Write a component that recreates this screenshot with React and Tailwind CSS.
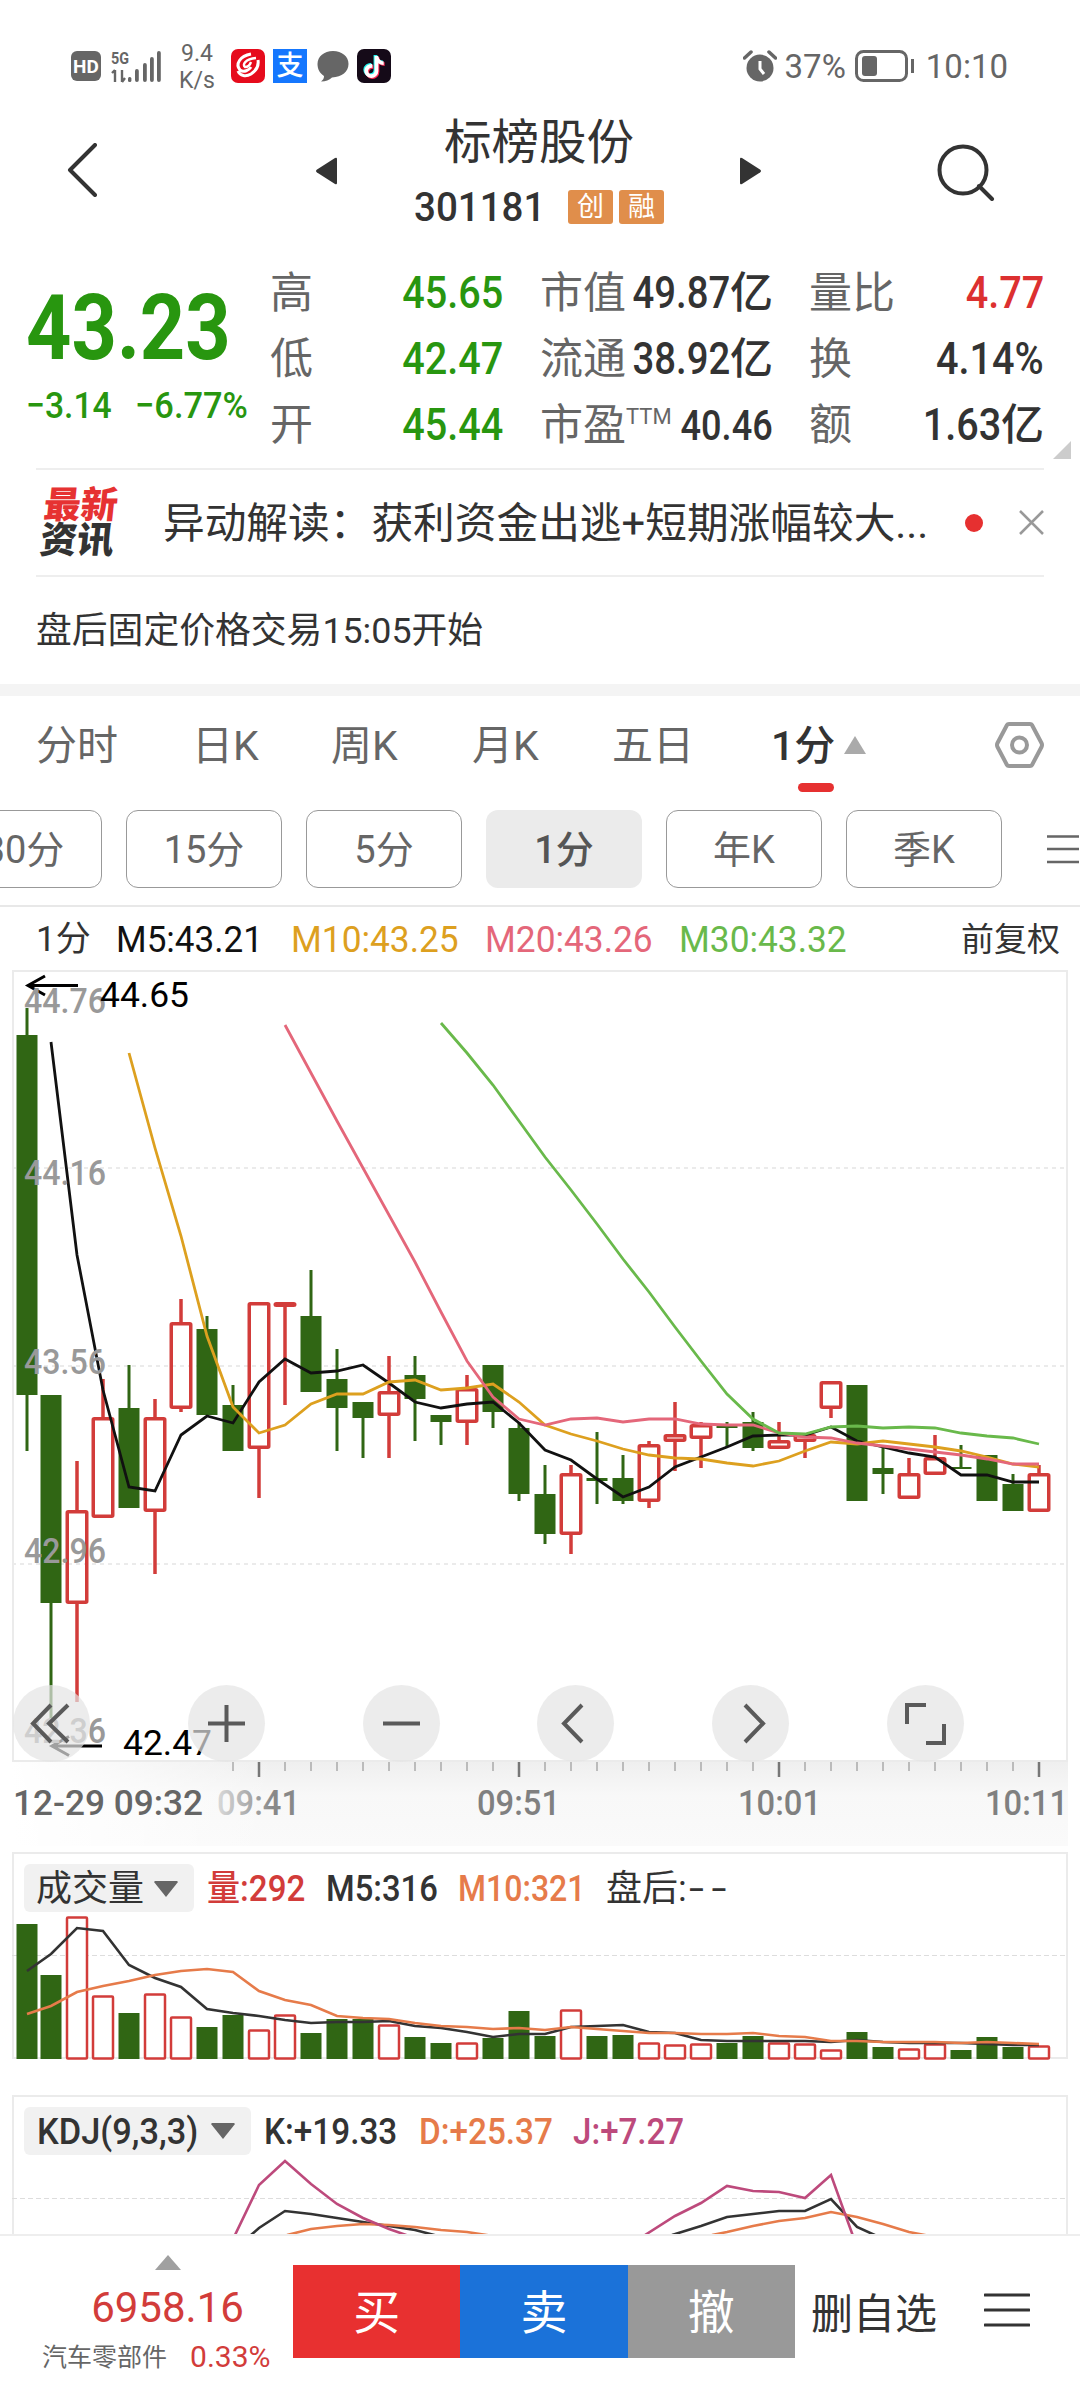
import React from "react";
import { FaTiktok } from "react-icons/fa";

const GREEN = "#306614";
const RED = "#d23c3a";

// [up, high, top, bottom, low]
const candles = [
  [0, 1008, 1035, 1395, 1451],
  [0, 1395, 1395, 1603, 1726],
  [1, 1461, 1510, 1604, 1702],
  [1, 1379, 1417, 1518, 1518],
  [0, 1365, 1408, 1508, 1508],
  [1, 1399, 1417, 1512, 1574],
  [1, 1299, 1322, 1409, 1412],
  [0, 1316, 1329, 1415, 1415],
  [0, 1385, 1405, 1451, 1451],
  [1, 1302, 1302, 1449, 1498],
  [1, 1302, 1302, 1307, 1405],
  [0, 1270, 1316, 1392, 1392],
  [0, 1349, 1379, 1408, 1451],
  [0, 1402, 1402, 1418, 1458],
  [1, 1356, 1391, 1416, 1458],
  [0, 1356, 1375, 1399, 1441],
  [0, 1415, 1415, 1422, 1445],
  [1, 1375, 1388, 1423, 1445],
  [0, 1365, 1365, 1412, 1428],
  [0, 1422, 1428, 1494, 1501],
  [0, 1465, 1494, 1534, 1544],
  [1, 1465, 1473, 1535, 1554],
  [0, 1432, 1478, 1481, 1504],
  [0, 1455, 1478, 1501, 1504],
  [1, 1441, 1444, 1502, 1508],
  [1, 1402, 1434, 1442, 1471],
  [1, 1422, 1424, 1439, 1468],
  [0, 1422, 1426, 1428, 1447],
  [0, 1412, 1422, 1448, 1451],
  [1, 1422, 1440, 1449, 1449],
  [1, 1434, 1434, 1442, 1458],
  [1, 1381, 1381, 1409, 1418],
  [0, 1385, 1385, 1501, 1501],
  [0, 1448, 1468, 1474, 1494],
  [1, 1458, 1473, 1499, 1499],
  [1, 1435, 1457, 1475, 1475],
  [0, 1445, 1467, 1469, 1469],
  [0, 1455, 1455, 1501, 1501],
  [0, 1474, 1484, 1511, 1511],
  [1, 1465, 1473, 1512, 1512],
];

const volumes = [
  1924, 1975, 1916, 1995, 2013, 1993, 2016, 2027, 2015, 2029, 2014, 2033, 2019, 2019, 2024, 2037, 2043, 2042, 2038,
  2011, 2036, 2009, 2036, 2035, 2042, 2044, 2043, 2043, 2036, 2042, 2043, 2049, 2032, 2047, 2048, 2043, 2050, 2037,
  2047, 2045,
];

const ma5 = [
  1042, 1255, 1390, 1487, 1491, 1435, 1416, 1423, 1382, 1359, 1373, 1371, 1365, 1383, 1402, 1408, 1404, 1402, 1423,
  1450, 1460, 1479, 1497, 1487, 1467, 1457, 1447, 1436, 1435, 1435, 1427, 1441, 1447, 1453, 1457, 1475, 1475, 1482,
  1482,
];
const ma10 = [
  1053, 1148, 1236, 1336, 1407, 1433, 1425, 1404, 1394, 1394, 1382, 1380, 1390, 1388, 1384, 1402, 1425, 1434, 1441,
  1449, 1455, 1458, 1459, 1463, 1466, 1461, 1451, 1442, 1444, 1441, 1444, 1447, 1451, 1457, 1464, 1467,
];
const ma20 = [
  1025, 1073, 1121, 1168, 1215, 1262, 1312, 1361, 1397, 1419, 1425, 1419, 1418, 1422, 1419, 1419, 1424, 1425, 1425,
  1433, 1437, 1438, 1443, 1446, 1449, 1452, 1455, 1459, 1464, 1464,
];
const ma30 = [
  1023, 1053, 1085, 1121, 1157, 1190, 1224, 1259, 1292, 1327, 1361, 1394, 1419, 1433, 1434, 1427, 1426, 1428, 1427,
  1428, 1433, 1436, 1438, 1444,
];
const vol5 = [
  1971, 1954, 1928, 1931, 1965, 1978, 1987, 2009, 2013, 2016, 2020, 2023, 2022, 2022, 2021, 2026, 2028, 2032, 2037,
  2034, 2034, 2027, 2026, 2025, 2032, 2033, 2040, 2041, 2041, 2041, 2041, 2042, 2040, 2042, 2043, 2043, 2043, 2044,
  2045, 2045,
];
const vol10 = [
  2014, 2006, 1992, 1986, 1981, 1975, 1971, 1969, 1972, 1991, 2000, 2005, 2016, 2018, 2019, 2023, 2026, 2027, 2029,
  2028, 2030, 2027, 2029, 2031, 2033, 2033, 2034, 2034, 2033, 2036, 2037, 2041, 2041, 2042, 2042, 2042, 2043, 2042,
  2043, 2044,
];

const cx = (i) => (i === 0 ? 27 : 25 + i * 26);
const line = (values, start) => values.map((y, i) => `${cx(i + start)},${y}`).join(" ");

// Narrow, DIN-like digits
function Num({ className = "", children }) {
  return <span className={`inline-block whitespace-nowrap ${className}`}>{children}</span>;
}

function Caret({ up, className }) {
  return (
    <svg className={className} viewBox="0 0 24 16" preserveAspectRatio="none" fill="currentColor">
      <path d={up ? "M12 0L24 16H0z" : "M1 0h22l1 1-12 15L0 1z"} />
    </svg>
  );
}

function StatusBar() {
  return (
    <div className="flex h-[108px] items-center pt-6 pr-[72px] pl-[71px] text-[#666]">
      <div className="flex h-[30px] w-[30px] items-center justify-center rounded-[6px] bg-[#666]">
        <span className="text-[19px] leading-none font-bold text-white">HD</span>
      </div>
      <svg className="ml-[10px] h-[34px] w-[52px]" viewBox="0 0 52 34" fill="#666">
        <text x="0" y="15" fontSize="17" fontWeight="700" textLength="18" lengthAdjust="spacingAndGlyphs">
          5G
        </text>
        <path d="M4 21v12M1 24l3-3M11 21v12M11 33l3-4" stroke="#666" strokeWidth="2.4" fill="none" />
        <rect x="17" y="28" width="3.4" height="5" rx="1.5" />
        <rect x="24" y="20" width="3.8" height="13" rx="1.9" />
        <rect x="32" y="14" width="3.8" height="19" rx="1.9" />
        <rect x="39" y="8" width="3.8" height="25" rx="1.9" />
        <rect x="46" y="2" width="3.8" height="31" rx="1.9" />
      </svg>
      <div className="mt-[2px] ml-[15px] flex w-[38px] flex-col items-center text-[23px] leading-[27px]">
        <span>9.4</span>
        <span>K/s</span>
      </div>
      <svg className="ml-[15px] h-[34px] w-[34px]" viewBox="0 0 34 34" fill="none" stroke="#fff">
        <rect width="34" height="34" rx="7" fill="#e60b1c" stroke="none" />
        <path d="M20 5C9 7 4 15 9 21c4 3 9 0 11-3" strokeWidth="3" />
        <path d="M25 9C14 10 11 16 14 18c3 0 5-2 6-5" strokeWidth="2.4" />
        <path d="M7 22c2 5 8 6 13 3 6-4 8-8 7-14" strokeWidth="3" />
      </svg>
      <div className="ml-2 flex h-[34px] w-[34px] items-center justify-center bg-[#1577fe]">
        <span className="text-[27px] leading-none font-medium text-white">支</span>
      </div>
      <svg className="ml-[10px] h-[31px] w-[32px]" viewBox="0 0 32 31" fill="#666">
        <path d="M16 0c9 0 15.500 5.500 15.500 13S25 26 15 26.500C12 29 9 30.500 4 30.500c2-1.500 3-3 3-5.500C2.500 22 .5 18 .5 13 .5 5.500 7 0 16 0z" />
      </svg>
      <div className="relative ml-2 h-[34px] w-[34px] rounded-[7px] bg-[#150a18]">
        <FaTiktok className="absolute top-[6px] left-[6px] h-[22px] w-[20px] text-[#25f4ee]" />
        <FaTiktok className="absolute top-[8px] left-[8px] h-[22px] w-[20px] text-[#fe2c55]" />
        <FaTiktok className="absolute top-[7px] left-[7px] h-[22px] w-[20px] text-white" />
      </div>

      <svg className="ml-auto h-[32px] w-[34px]" viewBox="0 0 34 32" fill="none" stroke="#666">
        <circle cx="17" cy="18" r="13.500" fill="#666" stroke="none" />
        <path d="M17 11v8l4 5" stroke="#fff" strokeWidth="3" />
        <path d="M1.500 8L8 2M32.500 8L26 2" strokeWidth="3.500" strokeLinecap="round" />
      </svg>
      <Num className="ml-2 text-[33px] leading-none">37%</Num>
      <svg className="ml-[9px] h-[34px] w-[60px]" viewBox="0 0 60 34" fill="none" stroke="#666" strokeWidth="3">
        <rect x="1.500" y="2.500" width="50" height="29" rx="7" />
        <rect x="7" y="7" width="15" height="20" rx="3" fill="#666" stroke="none" />
        <path d="M57.500 10v14" />
      </svg>
      <Num className="ml-[11px] text-[33px] leading-none">10:10</Num>
    </div>
  );
}

function Header() {
  return (
    <header className="flex h-32 items-center pr-[85px] pl-[67px] text-[#333]">
      <svg className="-mt-1 h-[54px] w-[30px]" viewBox="0 0 30 54" fill="none" stroke="currentColor" strokeWidth="4">
        <path d="M28 2L3 27l25 25" strokeLinecap="round" strokeLinejoin="round" />
      </svg>
      <svg className="-mt-[3px] ml-[218px] h-[28px] w-[23px]" viewBox="0 0 23 28" fill="currentColor">
        <path d="M22 2v24q0 2-2 1L2 15.500q-2-1.500 0-3L20 1q2-1 2 1z" />
      </svg>
      <div className="flex w-[402px] flex-col items-center">
        <div className="flex h-[70px] items-center pt-[2px] text-[47.500px] leading-none">标榜股份</div>
        <div className="flex h-[58px] items-center">
          <div className="w-[154px]">
            <Num className="origin-left scale-x-[0.94] text-[41px] leading-none font-medium">301181</Num>
          </div>
          <div className="flex gap-[6px] text-[27px] leading-none text-white">
            <span className="flex h-[34px] w-[45px] items-center justify-center rounded-[3px] bg-[#e08e4b]">创</span>
            <span className="flex h-[34px] w-[45px] items-center justify-center rounded-[3px] bg-[#e08e4b]">融</span>
          </div>
        </div>
      </div>
      <svg className="-mt-[3px] -ml-px h-[28px] w-[23px]" viewBox="0 0 23 28" fill="currentColor">
        <path d="M1 2v24q0 2 2 1l18-11.500q2-1.500 0-3L3 1Q1 0 1 2z" />
      </svg>
      <svg className="ml-auto h-[58px] w-[58px]" viewBox="0 0 58 58" fill="none" stroke="currentColor" strokeWidth="4">
        <circle cx="26" cy="27" r="23.500" />
        <path d="M42 43l13 13" strokeLinecap="round" />
      </svg>
    </header>
  );
}

const stats = [
  { a: "高", av: "45.65", b: "市值", bv: "49.87", bu: "亿", c: "量比", cv: "4.77", red: true },
  { a: "低", av: "42.47", b: "流通", bv: "38.92", bu: "亿", c: "换", cv: "4.14%" },
  { a: "开", av: "45.44", b: "市盈", sup: "TTM", bv: "40.46", c: "额", cv: "1.63", cu: "亿" },
];

function Quote() {
  return (
    <section className="relative mx-[26px] flex h-[232px] pt-[24px]">
      <div className="w-[244px] text-[#28960f]">
        <div className="mt-[23px] h-[92px]">
          <Num className="origin-left scale-x-[0.88] text-[90px] leading-[92px] font-bold">43.23</Num>
        </div>
        <div className="mt-[3px] flex">
          <div className="w-[109px]">
            <Num className="origin-left scale-x-[0.91] text-[37px] font-medium">−3.14</Num>
          </div>
          <Num className="origin-left scale-x-[0.93] text-[37px] font-medium">−6.77%</Num>
        </div>
      </div>
      <div className="flex w-[774px] flex-col text-[43px] leading-none text-[#666]">
        {stats.map((s) => (
          <div key={s.a} className="flex h-[66px] items-center">
            <span className="w-[64px]">{s.a}</span>
            <div className="w-[169px] text-right">
              <Num className="origin-right scale-x-[0.9] text-[44px] font-medium text-[#28960f]">{s.av}</Num>
            </div>
            <div className="ml-[37px] flex w-[233px] items-center justify-between">
              <div className="flex shrink-0 items-start">
                {s.b}
                {s.sup && <span className="mt-[2px] text-[22px] leading-none">{s.sup}</span>}
              </div>
              <div className="-ml-6 flex items-center font-medium text-[#333]">
                <Num className={s.sup ? "origin-right scale-x-[0.84] text-[43px]" : "origin-right scale-x-[0.87] text-[44px]"}>
                  {s.bv}
                </Num>
                {s.bu && <span>{s.bu}</span>}
              </div>
            </div>
            <div className="ml-[36px] flex flex-1 items-center justify-between">
              <span>{s.c}</span>
              <div className={`flex items-center font-medium ${s.red ? "text-[#dc3030]" : "text-[#333]"}`}>
                <Num className="origin-right scale-x-[0.9] text-[44px]">{s.cv}</Num>
                {s.cu && <span>{s.cu}</span>}
              </div>
            </div>
          </div>
        ))}
      </div>
      <svg className="absolute top-[205px] -right-[17px] h-[18px] w-[18px]" viewBox="0 0 18 18" fill="#ccc">
        <path d="M18 0v18H0z" />
      </svg>
    </section>
  );
}

function News() {
  return (
    <>
      <div className="mx-9 flex h-[109px] items-center border-y-2 border-[#eee] text-[#333]">
        <div className="flex w-[127px] -skew-x-6 flex-col pl-[6px] text-[37px] leading-[35px] font-black">
          <span className="text-[#e63232]">最新</span>
          <span>资讯</span>
        </div>
        <p className="w-[770px] pt-[2px] text-[41.700px] leading-none whitespace-nowrap">
          异动解读：获利资金出逃+短期涨幅较大...
        </p>
        <span className="ml-8 h-[18px] w-[18px] rounded-full bg-[#e63030]" />
        <svg className="ml-auto h-[25px] w-[25px]" viewBox="0 0 25 25" stroke="#999" strokeWidth="2.500">
          <path d="M1 1l23 23M24 1L1 24" />
        </svg>
      </div>
      <div className="flex h-[107px] items-center px-9 pt-[2px] text-[35.800px] leading-none text-[#333]">
        盘后固定价格交易15:05开始
      </div>
      <div className="h-3 bg-[#f4f4f4]" />
    </>
  );
}

function Tabs() {
  return (
    <>
      <nav className="flex h-[100px] items-center pt-px pr-9 pl-9 text-[41px] leading-none text-[#666]">
        <span className="w-[156px]">分时</span>
        <span className="w-[139px]">日K</span>
        <span className="w-[141px]">周K</span>
        <span className="w-[140px]">月K</span>
        <span className="w-[159px]">五日</span>
        <span className="relative flex items-center font-medium text-[#333]">
          1分
          <span className="absolute top-[57px] left-[27px] h-[9px] w-[36px] rounded-full bg-[#e63030]" />
        </span>
        <Caret up className="-mt-[3px] ml-[9px] h-[18px] w-[22px] text-[#aaa]" />
        <svg
          className="-mt-[4px] ml-auto h-[46px] w-[49px]"
          viewBox="0 0 49 46"
          fill="none"
          stroke="#999"
          strokeWidth="4"
          strokeLinejoin="round"
        >
          <path d="M14 2h21q1.500 0 2 1l9.500 18q1 2 0 4L37 43q-.5 1-2 1H14q-1.500 0-2-1L2.500 25q-1-2 0-4L12 3q.5-1 2-1z" />
          <circle cx="24.500" cy="23" r="7.500" />
        </svg>
      </nav>
      <div className="flex h-[111px] gap-6 overflow-hidden border-b-2 border-[#e8e8e8] pt-[14px] text-[38px] leading-none text-[#666]">
        {["30分", "15分", "5分", "1分", "年K", "季K"].map((t) => (
          <button
            key={t}
            className={`flex h-[78px] w-[156px] shrink-0 items-center justify-center rounded-xl pt-[2px] first:-ml-[54px] ${
              t === "1分" ? "bg-[#ebebeb] font-medium text-[#555]" : "border-[1.5px] border-[#999]"
            }`}
          >
            {t}
          </button>
        ))}
        <svg className="mt-[24px] ml-[20px] h-[30px] w-[34px] shrink-0" viewBox="0 0 34 30" stroke="#666" strokeWidth="2.500">
          <path d="M1 2.500h32M1 15h32M1 28h32" />
        </svg>
      </div>
    </>
  );
}

function Legend() {
  return (
    <div className="flex h-[63px] items-center pt-[2px] pr-5 pl-9 text-[36px] leading-none">
      <span className="w-[80px] text-[35px] text-[#333]">1分</span>
      <Num className="w-[175px] origin-left scale-x-[0.975] text-[#111]">M5:43.21</Num>
      <Num className="w-[194px] origin-left scale-x-[0.98] text-[#dda01f]">M10:43.25</Num>
      <Num className="w-[194px] origin-left scale-x-[0.98] text-[#e4677a]">M20:43.26</Num>
      <Num className="origin-left scale-x-[0.98] text-[#69b94b]">M30:43.32</Num>
      <span className="ml-auto text-[33px] text-[#333]">前复权</span>
    </div>
  );
}

function Label({ x, y, w, size = 35, fill = "#999", weight = 500, children }) {
  return (
    <text
      x={x}
      y={y}
      fontSize={size}
      fill={fill}
      fontWeight={weight}
      textLength={w}
      lengthAdjust="spacingAndGlyphs"
    >
      {children}
    </text>
  );
}

const tools = [
  "M38 20L20 38.500 38 57M55 20L36 38.500 55 57",
  "M38.500 20v37M20 38.500h37",
  "M20 38.500h37",
  "M45 20L27 38.500 45 57",
  "M33 20l18 18.500L33 57",
  "M20 39V20h19M57 39v19H39",
];

function PriceChart() {
  return (
    <div className="relative h-[792px]">
      <svg className="block h-[792px] w-[1080px]" viewBox="0 970 1080 792">
        <rect x="13" y="971" width="1054" height="790" fill="none" stroke="#ebebeb" strokeWidth="2" />
        {[1168, 1366, 1564].map((y) => (
          <path key={y} d={`M12 ${y}H1066`} stroke="#ebebeb" strokeWidth="2" strokeDasharray="4 4" />
        ))}
        {candles.map(([up, high, top, bottom, low], i) =>
          up ? (
            <g key={i} fill="none" stroke={RED} strokeWidth="3.500">
              <path d={`M${cx(i)} ${high}V${top}M${cx(i)} ${bottom}V${low}`} />
              <rect
                x={cx(i) - 9.750}
                y={top + 1.750}
                width="19.500"
                height={Math.max(bottom - top - 3.500, 1.500)}
                rx="1"
              />
            </g>
          ) : (
            <g key={i} fill={GREEN}>
              <rect x={cx(i) - 1.500} y={high} width="3" height={low - high} />
              <rect x={cx(i) - 10.500} y={top} width="21" height={bottom - top} />
            </g>
          )
        )}
        <g fill="none" strokeWidth="2.800">
          <polyline points={line(ma5, 1)} stroke="#111" />
          <polyline points={line(ma10, 4)} stroke="#dda01f" />
          <polyline points={line(ma20, 10)} stroke="#e4677a" />
          <polyline points={line(ma30, 16)} stroke="#69b94b" />
        </g>
        <g fill="none" stroke="#000" strokeWidth="3">
          <path d="M78 985.500H28M45 976l-17 9.500L45 995" />
          <path d="M102 1746H52M69 1736.500L52 1746l17 9.500" />
        </g>
        <Label x="24" y="1013" w="82">44.76</Label>
        <Label x="24" y="1185" w="82">44.16</Label>
        <Label x="24" y="1374" w="82">43.56</Label>
        <Label x="24" y="1563" w="82">42.96</Label>
        <Label x="24" y="1743" w="82">42.36</Label>
        <Label x="100" y="1007" w="89" fill="#000" weight={400}>44.65</Label>
        <Label x="123" y="1755" w="89" fill="#000" weight={400}>42.47</Label>
      </svg>
      {/* Floating tool buttons */}
      <div className="absolute bottom-0 left-[13px] flex gap-[97.800px]">
        {tools.map((d) => (
          <button key={d} className="h-[77px] w-[77px] rounded-full bg-[#e4e4e4]/70">
            <svg viewBox="0 0 77 77" fill="none" stroke="#5a5a5a" strokeWidth="4">
              <path d={d} />
            </svg>
          </button>
        ))}
      </div>
    </div>
  );
}

function TimeAxis() {
  const ticks = Array.from({ length: 32 }, (_, i) => i + 8);
  return (
    <svg className="block h-[84px] w-[1080px]" viewBox="0 1762 1080 84">
      <defs>
        <linearGradient id="axisFade" x1="0" x2="1">
          <stop offset="0" stopColor="#fff" />
          <stop offset="0.25" stopColor="#fff" stopOpacity="0" />
        </linearGradient>
        <linearGradient id="axisShade" x1="0" x2="0" y1="0" y2="1">
          <stop offset="0" stopColor="#efefef" />
          <stop offset="0.4" stopColor="#f8f8f8" />
          <stop offset="1" stopColor="#fafafa" />
        </linearGradient>
        <linearGradient id="timeFade" gradientUnits="userSpaceOnUse" x1="215" x2="298" y1="0" y2="0">
          <stop offset="0" stopColor="#ddd" />
          <stop offset="0.7" stopColor="#888" />
        </linearGradient>
      </defs>
      <rect x="12" y="1762" width="1056" height="84" fill="url(#axisShade)" />
      <rect x="12" y="1762" width="1056" height="84" fill="url(#axisFade)" />
      {ticks.map((i) =>
        i % 10 === 9 ? (
          <path key={i} d={`M${cx(i)} 1762v15`} stroke="#777" strokeWidth="2.500" />
        ) : (
          <path key={i} d={`M${cx(i)} 1762v9`} stroke="#aaa" strokeWidth="1.500" />
        )
      )}
      <Label x="13" y="1815" w="190" fill="#666">12-29 09:32</Label>
      <Label x="217" y="1815" w="83" fill="url(#timeFade)">09:41</Label>
      <Label x="477" y="1815" w="83" fill="#808080">09:51</Label>
      <Label x="738" y="1815" w="83" fill="#808080">10:01</Label>
      <Label x="985" y="1815" w="83" fill="#808080">10:11</Label>
    </svg>
  );
}

function VolumePanel() {
  return (
    <div className="relative mt-[6px] h-[208px] text-[36px] leading-none text-[#333]">
      <svg className="absolute inset-0 h-[208px] w-[1080px]" viewBox="0 1852 1080 208">
        <rect x="13" y="1853" width="1054" height="205" fill="none" stroke="#ebebeb" strokeWidth="2" />
        <path d="M12 1955.500H1066" stroke="#ddd" strokeDasharray="5 3" />
        {volumes.map((y, i) =>
          candles[i][0] ? (
            <rect
              key={i}
              x={cx(i) - 10}
              y={y + 1.500}
              width="20"
              height={2058.500 - y - 1.500}
              fill="#fff"
              stroke={RED}
              strokeWidth="2.500"
              rx="1"
            />
          ) : (
            <rect key={i} x={cx(i) - 10.500} y={y} width="21" height={2059 - y} fill={GREEN} />
          )
        )}
        <g fill="none" strokeWidth="2.600">
          <polyline points={line(vol5, 0)} stroke="#333" />
          <polyline points={line(vol10, 0)} stroke="#e67b4a" />
        </g>
      </svg>
      <div className="relative flex items-center pt-3 pl-6 font-medium">
        <button className="flex h-12 w-[170px] items-center rounded-md bg-[#f1f1f1] pt-px pl-3 text-[36px] font-normal">
          成交量
          <Caret className="ml-[10px] h-[16px] w-6 text-[#666]" />
        </button>
        <Num className="ml-[13px] w-[119px] origin-left scale-x-[0.92] pt-[2px] text-[#d23c3a]">量:292</Num>
        <Num className="w-[132px] origin-left scale-x-[0.91] pt-[2px]">M5:316</Num>
        <Num className="w-[148px] origin-left scale-x-[0.89] pt-[2px] text-[#e67b4a]">M10:321</Num>
        <span className="pt-[2px] font-normal">盘后:</span>
        <Num className="ml-[2px] origin-left scale-x-[1.5] pt-[2px] font-normal tracking-[5px]">--</Num>
      </div>
    </div>
  );
}

function KdjPanel() {
  return (
    <div className="relative mt-[35px] h-[139px] text-[36px] leading-none text-[#333]">
      <svg className="absolute inset-0 h-[139px] w-[1080px]" viewBox="0 2095 1080 139">
        <path d="M13 2236V2096H1067V2236" fill="none" stroke="#ebebeb" strokeWidth="2" />
        <path d="M12 2198.500H1066" stroke="#ddd" strokeDasharray="5 3" />
        <g fill="none" strokeWidth="2.600">
          <path
            d="M251 2235L259 2228 285 2211 311 2214 337 2218 363 2222 389 2226 415 2230 438 2236M672 2235L701 2226 727 2217 753 2214 779 2211 805 2211 831 2199 857 2227 877 2236"
            stroke="#333"
          />
          <path
            d="M287 2235L311 2229 337 2226 363 2224 389 2225 415 2227 441 2230 467 2232 493 2236M712 2235L727 2232 753 2226 779 2221 805 2218 831 2212 857 2217 883 2224 909 2232 935 2237"
            stroke="#e67b4a"
          />
          <path
            d="M235 2235L259 2185 285 2161 311 2184 337 2204 363 2218 389 2229 409 2236M645 2235L675 2216 701 2203 727 2186 753 2191 779 2192 805 2198 831 2175 853 2236"
            stroke="#bd4a7c"
          />
        </g>
      </svg>
      <div className="relative flex items-center pt-3 pl-6 font-medium">
        <button className="flex h-12 w-[227px] items-center rounded-md bg-[#f1f1f1] pl-[13px]">
          <Num className="w-[174px] origin-left scale-x-[0.955] pt-[2px] text-left">KDJ(9,3,3)</Num>
          <Caret className="h-[16px] w-6 text-[#666]" />
        </button>
        <Num className="ml-[13px] w-[155px] origin-left scale-x-[0.925] pt-[2px]">K:+19.33</Num>
        <Num className="w-[154px] origin-left scale-x-[0.925] pt-[2px] text-[#e67b4a]">D:+25.37</Num>
        <Num className="origin-left scale-x-[0.92] pt-[2px] text-[#bd4a7c]">J:+7.27</Num>
      </div>
    </div>
  );
}

function BottomBar() {
  return (
    <footer className="flex h-[154px] border-t-2 border-[#eee] bg-white text-[#333]">
      <div className="flex w-[293px] flex-col items-center pt-[19px] pl-[42px]">
        <Caret up className="h-[15px] w-[26px] text-[#a0a0a0]" />
        <Num className="mt-[17px] text-[42px] leading-[42px] text-[#d23c3a]">6958.16</Num>
        <div className="mt-[13px] flex items-center gap-[23px] self-start text-[25px] leading-none whitespace-nowrap text-[#666]">
          汽车零部件
          <Num className="text-[30px] text-[#d23c3a]">0.33%</Num>
        </div>
      </div>
      <div className="mt-[29px] flex h-[93px] w-[502px] text-[47px] leading-none text-white">
        <button className="flex-1 bg-[#e83030] pt-[2px]">买</button>
        <button className="flex-1 bg-[#1b72d9] pt-[2px]">卖</button>
        <button className="flex-1 bg-[#999] pt-[2px]">撤</button>
      </div>
      <span className="mt-[58px] ml-[16px] text-[42px] leading-none">删自选</span>
      <svg className="mt-[57px] ml-[47px] h-[34px] w-[46px]" viewBox="0 0 46 34" stroke="#333" strokeWidth="3">
        <path d="M1 2h44M1 17h44M1 32h44" strokeLinecap="round" />
      </svg>
    </footer>
  );
}

export default function App() {
  return (
    <div className="h-[2388px] w-[1080px] overflow-hidden bg-white font-[Roboto,'Noto_Sans_CJK_SC',sans-serif]">
      <StatusBar />
      <Header />
      <Quote />
      <News />
      <Tabs />
      <Legend />
      <PriceChart />
      <TimeAxis />
      <VolumePanel />
      <KdjPanel />
      <BottomBar />
    </div>
  );
}
